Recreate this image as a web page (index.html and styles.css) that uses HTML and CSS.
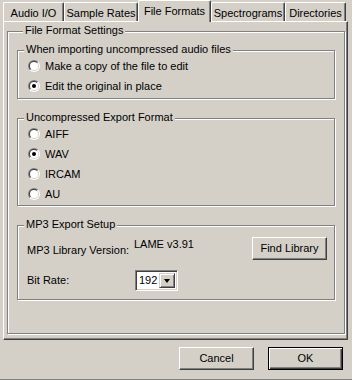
FILE: index.html
```html
<!DOCTYPE html>
<html>
<head>
<meta charset="utf-8">
<link rel="stylesheet" href="styles.css">
</head>
<body>
<div class="dialog">
  <div class="tabs">
    <div class="tab t-audio">Audio I/O</div>
    <div class="tab t-sample">Sample Rates</div>
    <div class="tab tab-active t-formats">File Formats</div>
    <div class="tab t-spec">Spectrograms</div>
    <div class="tab t-dir">Directories</div>
  </div>
  <div class="panel">
    <div class="group outer">
      <div class="legend">File Format Settings</div>
      <div class="group g1">
        <div class="legend">When importing uncompressed audio files</div>
        <div class="row"><span class="radio"><span class="radio-in"><span class="radio-face"></span></span></span><span>Make a copy of the file to edit</span></div>
        <div class="row"><span class="radio"><span class="radio-in"><span class="radio-face checked"></span></span></span><span>Edit the original in place</span></div>
      </div>
      <div class="group g2">
        <div class="legend">Uncompressed Export Format</div>
        <div class="row"><span class="radio"><span class="radio-in"><span class="radio-face"></span></span></span><span>AIFF</span></div>
        <div class="row"><span class="radio"><span class="radio-in"><span class="radio-face checked"></span></span></span><span>WAV</span></div>
        <div class="row"><span class="radio"><span class="radio-in"><span class="radio-face"></span></span></span><span>IRCAM</span></div>
        <div class="row"><span class="radio"><span class="radio-in"><span class="radio-face"></span></span></span><span>AU</span></div>
      </div>
      <div class="group g3">
        <div class="legend">MP3 Export Setup</div>
        <div class="mp3-row lib-row">
          <span class="field-label lib-label">MP3 Library Version:</span>
          <span class="lib-value">LAME v3.91</span>
          <button class="btn find-btn">Find Library</button>
        </div>
        <div class="mp3-row rate-row">
          <span class="field-label">Bit Rate:</span>
          <div class="combo">
            <span class="combo-text">192</span>
            <span class="combo-btn"><span class="arrow"></span></span>
          </div>
        </div>
      </div>
    </div>
  </div>
  <div class="footer">
    <button class="btn">Cancel</button>
    <button class="btn btn-default">OK</button>
  </div>
</div>
</body>
</html>
```
FILE: styles.css
```css
html, body {
  margin: 0;
  padding: 0;
  background: #d4d0c8;
}
body {
  font: 11px/13px "Liberation Sans", Arial, sans-serif;
  color: #000;
}
.dialog {
  width: 352px;
  height: 380px;
  box-sizing: border-box;
  border-bottom: 1px solid #808080;
  display: flex;
  flex-direction: column;
}

/* Tabs */
.tabs {
  display: flex;
  height: 21px;
  padding-left: 3px;
  align-items: flex-start;
}
.tab {
  box-sizing: border-box;
  height: 19px;
  margin-top: 2px;
  border-top: 1px solid #fff;
  border-left: 1px solid #fff;
  border-right: 1px solid #404040;
  box-shadow: inset -1px 0 #808080;
  border-top-left-radius: 2px;
  border-top-right-radius: 2px;
  padding-top: 4px;
  text-align: center;
  white-space: nowrap;
  background: #d4d0c8;
}
.t-audio { width: 61px; }
.t-sample { width: 74px; }
.t-formats { width: 73px; }
.t-spec { width: 74px; }
.t-dir { width: 61px; }
.tab-active {
  height: 22px;
  margin-top: 0;
  position: relative;
  z-index: 1;
}

/* Panel */
.panel {
  box-sizing: border-box;
  margin-left: 3px;
  width: 345px;
  height: 319px;
  border: 1px solid;
  border-color: #fff #404040 #404040 #fff;
  box-shadow: inset -1px -1px #808080;
  padding: 9px 2px 0 3px;
}

/* Group boxes */
.group {
  box-sizing: border-box;
  border: 1px solid #808080;
  box-shadow: inset 1px 1px #fff, 1px 1px #fff;
  display: flex;
  flex-direction: column;
  align-items: flex-start;
}
.outer {
  height: 303px;
  padding: 0 9px;
  align-items: stretch;
}
.outer > .legend { align-self: flex-start; }
.legend {
  margin-top: -8px;
  margin-left: 6px;
  padding: 0 2px;
  background: #d4d0c8;
  white-space: nowrap;
}
.g1 {
  margin-top: 13px;
  padding-bottom: 2px;
}
.g2 {
  margin-top: 19px;
  padding-bottom: 1px;
}
.g3 {
  margin-top: 19px;
  padding-bottom: 8px;
  align-items: stretch;
}
.g3 > .legend { align-self: flex-start; }
.g1 .row:first-of-type,
.g2 .row:first-of-type { margin-top: 2px; }

.row {
  display: flex;
  align-items: center;
  height: 20px;
  padding-left: 10px;
  gap: 5px;
}

/* Classic radio */
.radio {
  width: 12px;
  height: 12px;
  border-radius: 50%;
  background: linear-gradient(135deg, #808080 50%, #ffffff 50%);
  display: flex;
  align-items: center;
  justify-content: center;
  flex: none;
}
.radio-in {
  width: 10px;
  height: 10px;
  border-radius: 50%;
  background: linear-gradient(135deg, #404040 50%, #d4d0c8 50%);
  display: flex;
  align-items: center;
  justify-content: center;
}
.radio-face {
  width: 8px;
  height: 8px;
  border-radius: 50%;
  background: #fff;
  display: flex;
  align-items: center;
  justify-content: center;
}
.radio-face.checked::after {
  content: "";
  width: 4px;
  height: 4px;
  border-radius: 50%;
  background: #000;
}

/* Buttons */
.btn {
  box-sizing: border-box;
  width: 75px;
  height: 23px;
  padding: 0;
  margin: 0;
  font: inherit;
  color: #000;
  background: #d4d0c8;
  border: 1px solid;
  border-color: #fff #404040 #404040 #fff;
  box-shadow: inset -1px -1px #808080;
  text-align: center;
}
.btn-default {
  border: 1px solid #000;
  box-shadow: inset 1px 1px #fff, inset -1px -1px #404040, inset -2px -2px #808080;
}

/* MP3 rows */
.mp3-row {
  display: flex;
  padding-left: 9px;
  padding-right: 7px;
}
.lib-row {
  margin-top: 6px;
  height: 23px;
  align-items: flex-start;
}
.lib-label { margin-top: 7px; }
.lib-value { margin-top: 1px; }
.field-label {
  width: 107px;
  flex: none;
  white-space: nowrap;
}
.lib-row .find-btn { margin-left: auto; }
.rate-row {
  margin-top: 10px;
  height: 21px;
  align-items: center;
}

/* Combo box */
.combo {
  box-sizing: border-box;
  width: 43px;
  height: 21px;
  margin-left: 1px;
  border: 1px solid;
  border-color: #808080 #fff #fff #808080;
  box-shadow: inset 1px 1px #404040, inset -1px -1px #d4d0c8;
  background: #fff;
  padding: 2px 2px 2px 3px;
  display: flex;
  align-items: stretch;
}
.combo-text {
  flex: 1;
  line-height: 15px;
}
.combo-btn {
  box-sizing: border-box;
  width: 16px;
  background: #d4d0c8;
  border: 1px solid;
  border-color: #d4d0c8 #404040 #404040 #d4d0c8;
  box-shadow: inset 1px 1px #fff, inset -1px -1px #808080;
  display: flex;
  align-items: center;
  justify-content: center;
}
.arrow {
  width: 0;
  height: 0;
  border-left: 3.5px solid transparent;
  border-right: 3.5px solid transparent;
  border-top: 4px solid #000;
}

.footer {
  display: flex;
  justify-content: flex-end;
  gap: 14px;
  margin-top: 7px;
  padding-right: 9px;
}
```
